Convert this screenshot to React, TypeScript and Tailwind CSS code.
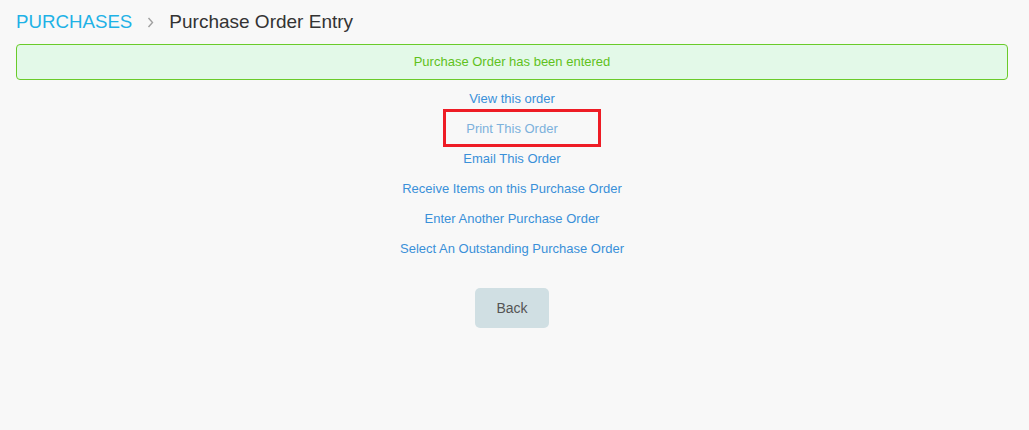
import React from 'react'

const links = [
  { label: 'View this order' },
  { label: 'Print This Order', muted: true, marked: true },
  { label: 'Email This Order' },
  { label: 'Receive Items on this Purchase Order' },
  { label: 'Enter Another Purchase Order' },
  { label: 'Select An Outstanding Purchase Order' },
]

export default function App() {
  return (
    <div
      className="min-h-[430px] bg-[#f8f8f8] pl-4 pr-[21px] pt-[10px]"
      style={{ fontFamily: '"Liberation Sans", Arial, sans-serif' }}
    >
      {/* Breadcrumb */}
      <div className="flex items-center h-6 text-[18.7px] leading-6">
        <span className="text-[#1fb2e6]">PURCHASES</span>
        <svg width="7" height="11" viewBox="0 0 7 11" className="ml-[15px] mr-[15px]" fill="none" stroke="#a0a0a0" strokeWidth="1.4">
          <polyline points="1.5 1 5.5 5.5 1.5 10" />
        </svg>
        <span className="text-[#333] text-[19px]">Purchase Order Entry</span>
      </div>

      {/* Alert */}
      <div className="mt-[10px] h-9 flex items-center justify-center rounded border border-[#6acb2a] bg-[#e3f9e8] text-[13px] text-[#5fc11c]">
        Purchase Order has been entered
      </div>

      {/* Links */}
      <div className="mt-[4px] flex flex-col items-center text-[13px]">
        {links.map((l) => (
          <div key={l.label} className="relative h-[30px] flex items-center">
            <a href="#" className={l.muted ? 'text-[#7cb1dc]' : 'text-[#3a90d9]'}>
              {l.label}
            </a>
            {l.marked && (
              <span className="absolute left-[-23px] top-[-5px] w-[158px] h-[38px] border-[3px] border-[#ee1c25]" />
            )}
          </div>
        ))}
      </div>

      <div className="mt-[24px] flex justify-center">
        <button
          type="button"
          className="w-[74px] h-10 rounded-[5px] bg-[#d0dfe3] text-sm text-[#555]"
        >
          Back
        </button>
      </div>
    </div>
  )
}
